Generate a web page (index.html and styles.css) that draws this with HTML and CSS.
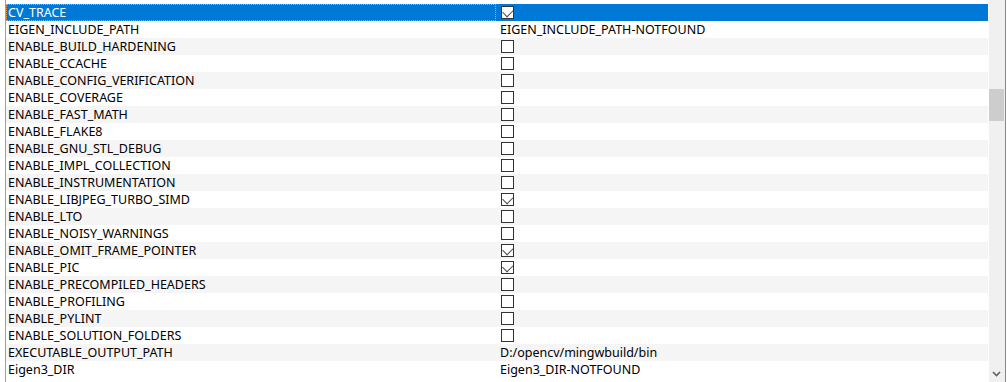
FILE: index.html
```html
<!DOCTYPE html>
<html lang="en">
<head>
  <meta charset="UTF-8">
  <title>CMake Cache</title>
  <link rel="stylesheet" href="styles.css">
</head>
<body>
  <div class="view">
    <div class="table">
      <div class="row selected"><div class="name focus">CV_TRACE</div><div class="value"><span class="chk on"></span></div></div>
      <div class="row"><div class="name">EIGEN_INCLUDE_PATH</div><div class="value text">EIGEN_INCLUDE_PATH-NOTFOUND</div></div>
      <div class="row"><div class="name">ENABLE_BUILD_HARDENING</div><div class="value"><span class="chk"></span></div></div>
      <div class="row"><div class="name">ENABLE_CCACHE</div><div class="value"><span class="chk"></span></div></div>
      <div class="row"><div class="name">ENABLE_CONFIG_VERIFICATION</div><div class="value"><span class="chk"></span></div></div>
      <div class="row"><div class="name">ENABLE_COVERAGE</div><div class="value"><span class="chk"></span></div></div>
      <div class="row"><div class="name">ENABLE_FAST_MATH</div><div class="value"><span class="chk"></span></div></div>
      <div class="row"><div class="name">ENABLE_FLAKE8</div><div class="value"><span class="chk"></span></div></div>
      <div class="row"><div class="name">ENABLE_GNU_STL_DEBUG</div><div class="value"><span class="chk"></span></div></div>
      <div class="row"><div class="name">ENABLE_IMPL_COLLECTION</div><div class="value"><span class="chk"></span></div></div>
      <div class="row"><div class="name">ENABLE_INSTRUMENTATION</div><div class="value"><span class="chk"></span></div></div>
      <div class="row"><div class="name">ENABLE_LIBJPEG_TURBO_SIMD</div><div class="value"><span class="chk on"></span></div></div>
      <div class="row"><div class="name">ENABLE_LTO</div><div class="value"><span class="chk"></span></div></div>
      <div class="row"><div class="name">ENABLE_NOISY_WARNINGS</div><div class="value"><span class="chk"></span></div></div>
      <div class="row"><div class="name">ENABLE_OMIT_FRAME_POINTER</div><div class="value"><span class="chk on"></span></div></div>
      <div class="row"><div class="name">ENABLE_PIC</div><div class="value"><span class="chk on"></span></div></div>
      <div class="row"><div class="name">ENABLE_PRECOMPILED_HEADERS</div><div class="value"><span class="chk"></span></div></div>
      <div class="row"><div class="name">ENABLE_PROFILING</div><div class="value"><span class="chk"></span></div></div>
      <div class="row"><div class="name">ENABLE_PYLINT</div><div class="value"><span class="chk"></span></div></div>
      <div class="row"><div class="name">ENABLE_SOLUTION_FOLDERS</div><div class="value"><span class="chk"></span></div></div>
      <div class="row"><div class="name">EXECUTABLE_OUTPUT_PATH</div><div class="value text">D:/opencv/mingwbuild/bin</div></div>
      <div class="row"><div class="name">Eigen3_DIR</div><div class="value text">Eigen3_DIR-NOTFOUND</div></div>
    </div>
    <div class="scrollbar">
      <div class="thumb"></div>
      <svg class="arrow" width="9" height="6" viewBox="0 0 9 6"><path d="M1 1 L4.5 4.5 L8 1" fill="none" stroke="#606060" stroke-width="1.6"/></svg>
    </div>
    <div class="edge"></div>
  </div>
</body>
</html>
```

FILE: styles.css
```css
* { margin: 0; padding: 0; box-sizing: border-box; }
body {
  background: #ffffff;
  font-family: "Noto Sans", "Liberation Sans", sans-serif;
  font-size: 12.5px;
  color: #000000;
}
.view {
  display: flex;
  width: 1007px; height: 382px;
  padding-left: 5px;
}
.table {
  width: 983px;
  border-left: 1px solid #a0a0a0;
  padding-top: 4px;
}
.row {
  display: grid;
  grid-template-columns: 490px 492px;
  height: 17px;
  line-height: 17px;
}
.row:nth-child(odd) { background: #f5f5f5; }
.row:nth-child(even) { background: #ffffff; }
.row.selected { background: #0078d7; color: #ffffff; }
.name { padding-left: 2px; white-space: nowrap; }
.focus { outline: 1px dotted #f0a050; outline-offset: -1px; }
.value { padding-left: 5px; white-space: nowrap; }
.value.text { padding-left: 4px; }
.chk {
  display: block;
  width: 13px; height: 13px;
  margin-top: 2px;
  border: 1px solid #333333;
  background: #ffffff;
  position: relative;
}
.chk.on::after {
  content: "";
  position: absolute;
  left: 3px; top: 1px;
  width: 6px; height: 8px;
  border-right: 1.5px solid #4a4a4a;
  border-bottom: 1.5px solid #4a4a4a;
  transform: rotate(45deg) translate(-1px, 0);
}
.scrollbar {
  width: 16px;
  margin-left: 1px;
  background: #f0f0f0;
  position: relative;
}
.thumb {
  margin: 89px 1px 0 0;
  height: 32px;
  background: #cdcdcd;
}
.arrow { position: absolute; left: 3px; bottom: 5px; }
.edge { width: 1px; background: #888888; }
```
